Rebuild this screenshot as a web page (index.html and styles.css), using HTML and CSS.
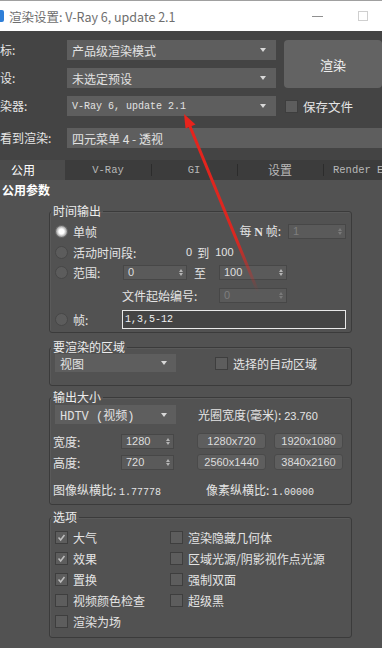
FILE: index.html
```html
<!DOCTYPE html>
<html lang="zh">
<head>
<meta charset="utf-8">
<link rel="stylesheet" href="styles.css">
</head>
<body>
<div class="titlebar">
  <span class="appicon"></span>
  <span class="title">渲染设置: V-Ray 6, update 2.1</span>
  <span class="min"></span>
  <span class="max"></span>
</div>

<div class="top">
  <span class="lbl r1">标:</span>
  <div class="dd r1 c2">产品级渲染模式<i class="caret"></i></div>
  <button class="render">渲染</button>

  <span class="lbl r2">设:</span>
  <div class="dd r2 c2">未选定预设<i class="caret"></i></div>

  <span class="lbl r3">染器:</span>
  <div class="dd r3 c2 mono">V-Ray 6, update 2.1<i class="caret"></i></div>
  <label class="savefile r3"><span class="cb"></span>保存文件</label>

  <span class="lbl r4">看到渲染:</span>
  <div class="dd r4 wide">四元菜单 4 - 透视</div>
</div>

<div class="tabs">
  <span class="tab active">公用</span>
  <span class="tab first mono">V-Ray</span>
  <span class="tab mono">GI</span>
  <span class="tab">设置</span>
  <span class="tab last mono">Render Elements</span>
</div>

<div class="panel">
  <div class="sec-title">公用参数</div>

  <fieldset class="grp g1">
    <legend>时间输出</legend>
    <div class="gbody">
      <div class="row">
        <span class="radio on"></span><span>单帧</span>
        <span class="everyn">每 <b class="serif">N</b> 帧:</span>
        <span class="spin dis w58">1<i class="arr"><i></i><i></i></i></span>
      </div>
      <div class="row m1">
        <span class="radio"></span><span class="l113">活动时间段:</span>
        <span class="num">0</span><span class="dao">到</span><span class="num">100</span>
      </div>
      <div class="row">
        <span class="radio"></span><span class="l50">范围:</span>
        <span class="spin w64">0<i class="arr"><i></i><i></i></i></span>
        <span class="to">至</span>
        <span class="spin w68">100<i class="arr"><i></i><i></i></i></span>
      </div>
      <div class="row m3 indent">
        <span class="l97">文件起始编号:</span>
        <span class="spin dis w68">0<i class="arr"><i></i><i></i></i></span>
      </div>
      <div class="row m4">
        <span class="radio"></span><span class="l49">帧:</span>
        <span class="frames">1,3,5-12</span>
      </div>
    </div>
  </fieldset>

  <fieldset class="grp g2">
    <legend>要渲染的区域</legend>
    <div class="gbody">
      <div class="row h18">
        <div class="dd small">视图<i class="caret"></i></div>
        <span class="cb ml39"></span><span class="cbl">选择的自动区域</span>
      </div>
    </div>
  </fieldset>

  <fieldset class="grp g3">
    <legend>输出大小</legend>
    <div class="gbody">
      <div class="row h19">
        <div class="dd small mono2">HDTV (视频)<i class="caret"></i></div>
        <span class="aperture">光圈宽度(毫米): <span class="num">23.760</span></span>
      </div>
      <div class="row h16 m9">
        <span class="l68">宽度:</span>
        <span class="spin w53">1280<i class="arr"><i></i><i></i></i></span>
        <span class="btn">1280x720</span>
        <span class="btn">1920x1080</span>
      </div>
      <div class="row h16 m5">
        <span class="l68">高度:</span>
        <span class="spin w53">720<i class="arr"><i></i><i></i></i></span>
        <span class="btn">2560x1440</span>
        <span class="btn">3840x2160</span>
      </div>
      <div class="row h16 m11">
        <span class="aspect">图像纵横比: <span class="mono">1.77778</span></span>
        <span class="aspect2">像素纵横比: <span class="mono">1.00000</span></span>
      </div>
    </div>
  </fieldset>

  <fieldset class="grp g4">
    <legend>选项</legend>
    <div class="gbody opts">
      <div class="opt"><span class="cb on"><svg viewBox="0 0 13 13"><polyline points="3,6.5 5.5,9.5 10,3.5"/></svg></span>大气</div>
      <div class="opt"><span class="cb"></span>渲染隐藏几何体</div>
      <div class="opt"><span class="cb on"><svg viewBox="0 0 13 13"><polyline points="3,6.5 5.5,9.5 10,3.5"/></svg></span>效果</div>
      <div class="opt"><span class="cb"></span>区域光源/阴影视作点光源</div>
      <div class="opt"><span class="cb on"><svg viewBox="0 0 13 13"><polyline points="3,6.5 5.5,9.5 10,3.5"/></svg></span>置换</div>
      <div class="opt"><span class="cb"></span>强制双面</div>
      <div class="opt"><span class="cb"></span>视频颜色检查</div>
      <div class="opt"><span class="cb"></span>超级黑</div>
      <div class="opt"><span class="cb"></span>渲染为场</div>
    </div>
  </fieldset>
</div>

<svg class="arrow" width="382" height="648" viewBox="0 0 382 648">
  <defs>
    <linearGradient id="fade" x1="186" y1="120" x2="258" y2="292" gradientUnits="userSpaceOnUse">
      <stop offset="0" stop-color="#e8231c" stop-opacity="1"/>
      <stop offset="0.7" stop-color="#e8231c" stop-opacity="0.9"/>
      <stop offset="1" stop-color="#e8231c" stop-opacity="0"/>
    </linearGradient>
  </defs>
  <line x1="189" y1="124" x2="258" y2="292" stroke="url(#fade)" stroke-width="3" stroke-linecap="round"/>
  <polygon points="184,114 195.5,124.5 185.5,128.5" fill="#e8231c"/>
</svg>
</body>
</html>
```

FILE: styles.css
```css
* { box-sizing: border-box; margin: 0; padding: 0; }
html, body { width: 382px; height: 648px; overflow: hidden; }
body {
  font-family: "Noto Sans CJK SC", "Noto Sans", sans-serif;
  font-size: 12px;
  color: #e4e4e4;
  background: #525252;
  position: relative;
}
.mono { font-family: "Liberation Mono", "Noto Sans CJK SC", monospace; font-size: 10px; }
.mono2 { font-family: "Liberation Mono", "Noto Sans CJK SC", monospace; }
.num { font-family: "Liberation Sans", "Noto Sans CJK SC", sans-serif; font-size: 11px; }
.serif { font-family: "Liberation Serif", serif; font-weight: bold; }

/* title bar */
.titlebar {
  height: 31px;
  background: #fff;
  border-top: 1px solid #a0a0a0;
  display: flex;
  align-items: center;
}
.appicon { width: 4px; height: 12px; background: #2f7fd8; border-radius: 0 2px 2px 0; margin-right: 5px; }
.title { flex: 1; color: #6e6e6e; font-size: 12.5px; }
.min { width: 11px; height: 1px; background: #909090; margin-right: 35px; }
.max { width: 10px; height: 10px; border: 1px solid #cfcfcf; margin-right: 14px; }

/* top area */
.top {
  background: #444;
  padding: 9px 0 12px;
  display: grid;
  grid-template-columns: 67px 209px 8px 98px;
  grid-template-rows: 20px 20px 20px 24px;
  row-gap: 8px;
}
.r1 { grid-row: 1; }
.r2 { grid-row: 2; }
.r3 { grid-row: 3; }
.r4 { grid-row: 4; align-self: end; height: 20px; }
.c2 { grid-column: 2; }
.lbl { grid-column: 1; line-height: 20px; white-space: nowrap; color: #e6e6e6; }
.dd {
  background: #5e5e5e;
  height: 20px;
  padding: 0 10px 0 5px;
  display: flex;
  align-items: center;
  justify-content: space-between;
  color: #e2e2e2;
  white-space: nowrap;
}
.dd.wide { grid-column: 2 / 5; }
.caret {
  width: 0; height: 0;
  border-left: 3.5px solid transparent;
  border-right: 3.5px solid transparent;
  border-top: 4px solid #d8d8d8;
}
.render {
  grid-column: 4;
  grid-row: 1 / 3;
  background: #636363;
  border: none;
  border-radius: 4px;
  color: #eee;
  font-family: "Noto Sans CJK SC", sans-serif;
  font-size: 13px;
}
.savefile { grid-column: 4; display: flex; align-items: center; padding-left: 1px; font-size: 12.5px; }
.savefile .cb { margin-right: 5px; }

.cb {
  width: 13px; height: 13px;
  background: #5d5d5d;
  border: 1px solid #3e3e3e;
  flex: none;
  display: inline-flex;
}
.cb svg { width: 11px; height: 11px; }
.cb polyline { fill: none; stroke: #bdbdbd; stroke-width: 1.8; }

/* tabs */
.tabs {
  display: flex;
  height: 20px;
  background: #3c3c3c;
  white-space: nowrap;
  overflow: hidden;
}
.tab {
  flex: none;
  width: 86px;
  line-height: 20px;
  text-align: center;
  color: #b8b8b8;
  background: linear-gradient(#2c2c2c, #2c2c2c) left center / 1px 12px no-repeat;
}
.tab.mono { font-size: 10.5px; }
.tab.active {
  width: 65px;
  text-align: left;
  padding-left: 11px;
  background: #4b4b4b;
  color: #fff;
}
.tab.first { background: none; }
.tab.last { flex: 1; min-width: 0; overflow: hidden; text-align: left; padding-left: 10px; }

/* panel */
.panel { padding-top: 3px; }
.sec-title { font-weight: bold; color: #fff; padding-left: 2px; line-height: 14px; }

.grp {
  margin-left: 49px;
  width: 303px;
  border: 1px solid #3b3b3b;
  border-radius: 3px;
  box-shadow: 1px 1px 0 #5a5a5a inset;
  padding: 0;
}
.grp legend {
  margin-left: 1px;
  padding: 0 2px;
  line-height: 14px;
  color: #ececec;
}
.g1 { margin-top: 7px; }
.g2 { margin-top: 7px; }
.g3 { margin-top: 4px; }
.g4 { margin-top: 5px; }

.gbody { padding: 3px 5px; }
.g2 .gbody { padding: 0 5px 13px; }
.g3 .gbody { padding: 1px 5px 7px; }
.g4 .gbody { padding: 3px 5px 5px; }

.row { display: flex; align-items: center; height: 20px; white-space: nowrap; }
.h18 { height: 18px; }
.h19 { height: 19px; }
.h16 { height: 16px; }
.m1 { margin-top: 1px; }
.m3 { margin-top: 3px; }
.m4 { margin-top: 4px; }
.m5 { margin-top: 5px; }
.m9 { margin-top: 9px; }
.m11 { margin-top: 11px; }
.indent { padding-left: 67px; }

.radio {
  width: 13px; height: 13px;
  border-radius: 50%;
  background: #5c5c5c;
  border: 1px solid #474747;
  margin-right: 5px;
  flex: none;
}
.radio.on {
  background: radial-gradient(circle, #ffffff 0 2.5px, #dcdcdc 3.5px, #a9a9a9 5px, #8a8a8a 6px);
  border-color: #6a6a6a;
}
.l113 { width: 113px; }
.l50 { width: 50px; }
.l97 { width: 97px; }
.l49 { width: 49px; }
.l68 { width: 68px; margin-left: -2px; }
.dao { margin: 0 6px 0 5px; }

.everyn { margin-left: auto; margin-right: 7px; }
.spin {
  height: 15px;
  background: #5a5a5a;
  border: 1px solid #474747;
  display: flex;
  align-items: center;
  justify-content: space-between;
  padding: 0 3px 0 4px;
  font-family: "Liberation Sans", sans-serif;
  font-size: 11px;
  color: #dedede;
  flex: none;
}
.spin.dis { color: #7e7e7e; }
.w58 { width: 58px; }
.w64 { width: 64px; }
.w68 { width: 68px; }
.w53 { width: 53px; }
.arr { display: flex; flex-direction: column; gap: 1px; }
.arr i {
  width: 0; height: 0;
  border-left: 2.5px solid transparent;
  border-right: 2.5px solid transparent;
}
.arr i:first-child { border-bottom: 3px solid #b5b5b5; }
.arr i:last-child { border-top: 3px solid #b5b5b5; }
.spin.dis .arr i:first-child { border-bottom-color: #7a7a7a; }
.spin.dis .arr i:last-child { border-top-color: #7a7a7a; }
.to { width: 32px; padding-left: 7px; }

.frames {
  width: 224px;
  height: 19px;
  background: #444;
  border: 1px solid #e8e8e8;
  padding-left: 2px;
  line-height: 17px;
  font-family: "Liberation Mono", monospace;
  font-size: 10px;
  color: #f0f0f0;
}

.dd.small { width: 121px; height: 100%; padding-right: 9px; }
.ml39 { margin-left: 39px; margin-right: 5px; }
.aperture { margin-left: 22px; }

.btn {
  width: 69px;
  height: 16px;
  margin-left: 23px;
  background: #5e5e5e;
  border: 1px solid #4a4a4a;
  border-radius: 3px;
  text-align: center;
  line-height: 14px;
  font-family: "Liberation Sans", sans-serif;
  font-size: 11px;
  color: #dcdcdc;
}
.btn + .btn { margin-left: 8px; }
.aspect { margin-left: -2px; width: 153px; }
.aspect .mono, .aspect2 .mono { font-size: 10px; }

.opts {
  display: grid;
  grid-template-columns: 115px auto;
  grid-auto-rows: 21px;
}
.opt { display: flex; align-items: center; white-space: nowrap; }
.opt .cb { margin-right: 5px; }

.arrow { position: absolute; left: 0; top: 0; pointer-events: none; }
```
